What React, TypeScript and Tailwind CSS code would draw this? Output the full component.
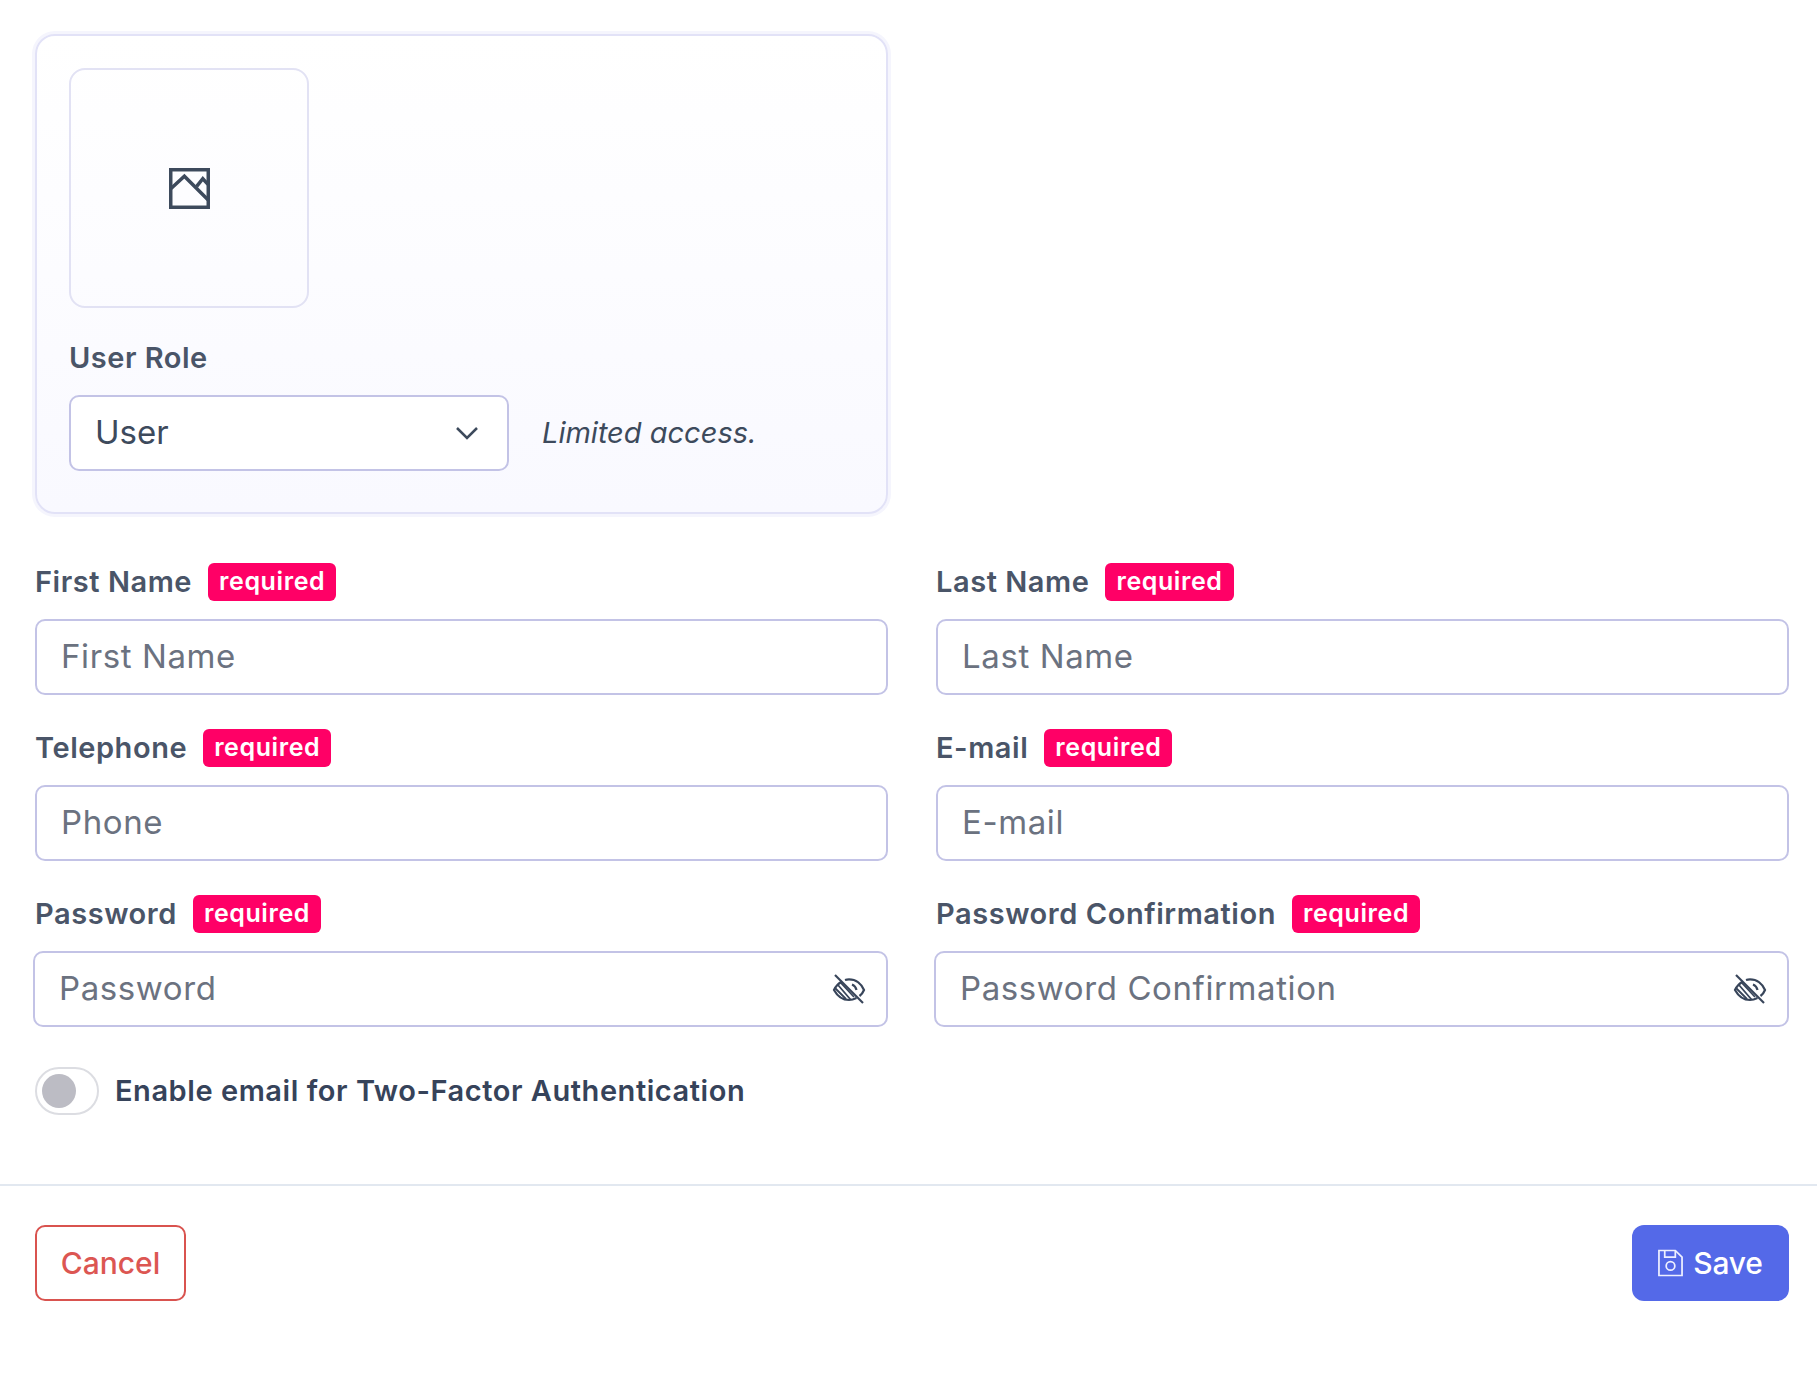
import React from "react";

function Required() {
  return (
    <span className="ml-[16px] inline-flex h-[38px] items-center rounded-[6px] bg-[#ff0066] px-[11px] text-[25px] font-semibold tracking-[0.6px] text-white">
      required
    </span>
  );
}

function EyeOff() {
  return (
    <svg width="34" height="34" viewBox="0 0 34 34" fill="none" stroke="#38455a" strokeWidth="2.2">
      <path d="M3 3 L31 31" />
      <path d="M10 9.5 C6.5 11.5 3.5 14.5 2 18 C5 23.5 10 28 17 28 C20 28 22.5 27 24.5 26" />
      <path d="M13 8 C14.5 7.5 16 7.4 17 7.4 C24 7.4 29.5 12 32 18 C31 20.5 29.5 22.5 27.5 24" />
      <path d="M20 12.5 C22.5 13.5 24 15.5 24.5 18" />
      <path d="M3.5 16.5 L14 27 M6 13 L18.5 27.5 M8.5 10.5 L22 25" strokeWidth="1.8" />
    </svg>
  );
}

function Field({ label, placeholder, eye }: { label: string; placeholder: string; eye?: boolean }) {
  return (
    <div className="flex flex-col">
      <div className="flex h-[38px] items-center text-[29px] font-semibold tracking-[0.55px] text-[#4a5568]">
        <span>{label}</span>
        <Required />
      </div>
      <div className={`mt-[18px] flex h-[76px] items-center rounded-[10px] border-2 border-[#c3c3e6] bg-white ${eye ? "-ml-0.5 pl-6 pr-[20px]" : "px-6"}`}>
        <span className="flex-1 text-[33px] font-normal tracking-[0.6px] text-[#6b7280]">{placeholder}</span>
        {eye ? <EyeOff /> : null}
      </div>
    </div>
  );
}

export default function App() {
  return (
    <div className="min-h-[1381px] bg-white font-['Inter',sans-serif]">
      <div className="pl-[35px] pr-[28px] pt-[34px]">
        <div className="w-[853px] rounded-[20px] border-2 border-[#e2e2f7] bg-gradient-to-b from-white to-[#f9f9ff] pl-[32px] pr-[33px] pt-[32px] pb-[41px] shadow-[0_0_0_3px_#f5f5fd]">
          <div className="flex h-[240px] w-[240px] items-center justify-center rounded-[16px] border-2 border-[#e2e2f4]">
            <svg width="41" height="41" viewBox="0 0 40 40" fill="none" stroke="#3d4a5c" strokeWidth="3.4">
              <rect x="1.7" y="1.7" width="36.6" height="36.6" />
              <path d="M2 20 L15 8 L38 31" />
              <path d="M27 18 L33 10.5 L38 16" />
            </svg>
          </div>
          <div className="mt-[31px] text-[29px] font-semibold leading-[38px] tracking-[0.5px] text-[#4a5568]">User Role</div>
          <div className="mt-[18px] flex items-center">
            <div className="flex h-[76px] w-[440px] items-center justify-between rounded-[10px] border-2 border-[#c3c3e6] bg-white pl-6 pr-[28px]">
              <span className="text-[33px] text-[#3d4a5c]">User</span>
              <svg width="24" height="24" viewBox="0 0 24 24" fill="none" stroke="#3d4a5c" strokeWidth="2.5">
                <path d="M2 7 L12 17 L22 7" />
              </svg>
            </div>
            <span className="ml-[33px] text-[29px] italic text-[#3d4a5c]">Limited access.</span>
          </div>
        </div>

        <div className="mt-[49px] grid grid-cols-[853px_853px] gap-x-[48px] gap-y-[34px]">
          <Field label="First Name" placeholder="First Name" />
          <Field label="Last Name" placeholder="Last Name" />
          <Field label="Telephone" placeholder="Phone" />
          <Field label="E-mail" placeholder="E-mail" />
          <Field label="Password" placeholder="Password" eye />
          <Field label="Password Confirmation" placeholder="Password Confirmation" eye />
        </div>

        <div className="mt-[40px] flex items-center">
          <div className="flex h-[48px] w-[64px] items-center rounded-full border-2 border-[#dcdde2] bg-white pl-[5px]">
            <div className="h-[34px] w-[34px] rounded-full bg-[#bcbcc4]" />
          </div>
          <span className="ml-[16px] text-[29px] font-semibold tracking-[0.55px] text-[#36435a]">Enable email for Two-Factor Authentication</span>
        </div>
      </div>

      <div className="mt-[69px] border-t-2 border-[#e2e8f0] pl-[35px] pr-[28px] pt-[39px]">
        <div className="flex items-center justify-between">
          <button className="flex h-[76px] w-[151px] items-center justify-center rounded-[10px] border-2 border-[#d9534f] bg-white text-[30px] font-medium text-[#dc5652]">
            Cancel
          </button>
          <button className="flex h-[76px] w-[157px] items-center justify-center gap-[10px] rounded-[12px] bg-[#5469e8] text-[30px] font-medium tracking-[-0.2px] text-white">
            <svg width="25" height="28" viewBox="0 0 26 28" fill="none" stroke="#eef0ff" strokeWidth="1.8">
              <path d="M1 1 H18 L25 8 V27 H1 Z" />
              <path d="M7 1 V8 H18 V1" />
              <circle cx="13" cy="17" r="4.5" />
            </svg>
            Save
          </button>
        </div>
      </div>
    </div>
  );
}
